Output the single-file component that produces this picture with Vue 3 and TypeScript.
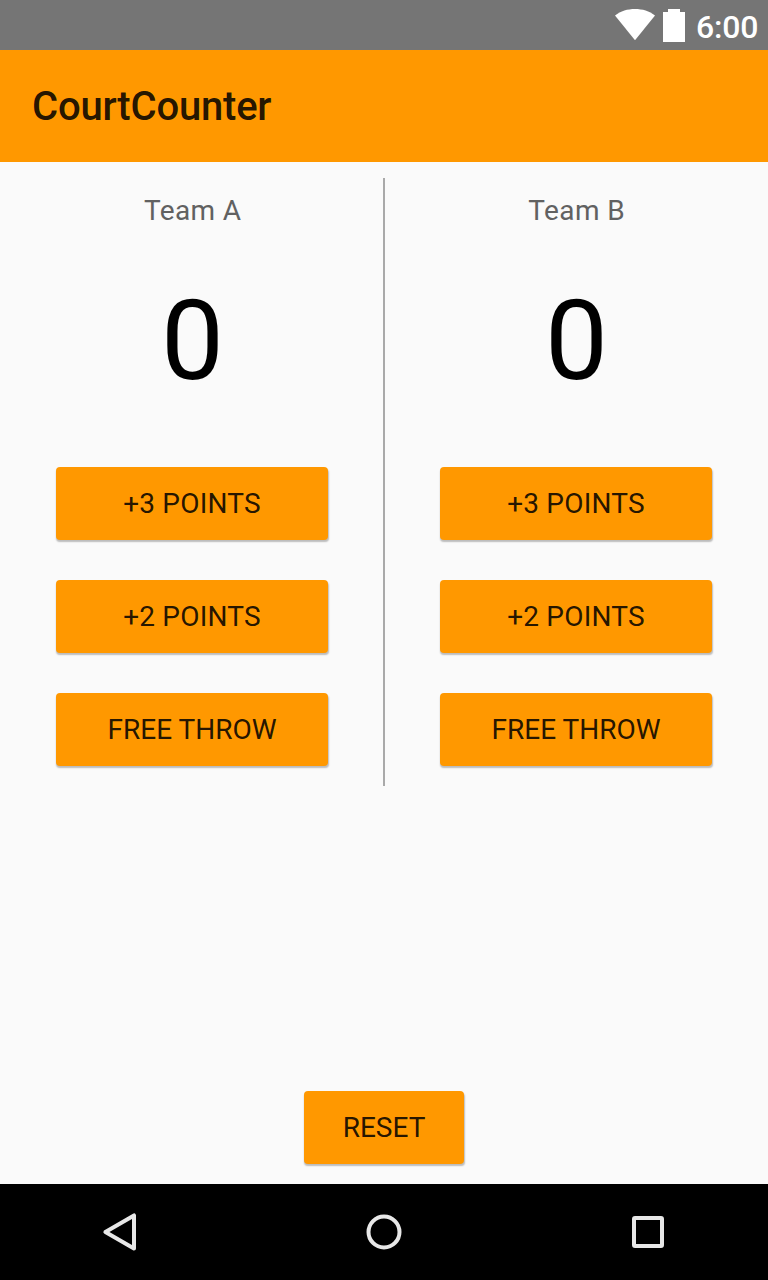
<script setup lang="ts">
import { reactive } from 'vue'

interface Team {
  name: string
  score: number
}

const teams = reactive<Team[]>([
  { name: 'Team A', score: 0 },
  { name: 'Team B', score: 0 },
])

const actions = [
  { label: '+3 Points', points: 3, wide: true },
  { label: '+2 Points', points: 2, wide: true },
  { label: 'Free throw', points: 1, wide: false },
]

function reset(): void {
  teams.forEach((team) => (team.score = 0))
}
</script>

<template>
  <div class="screen">
    <header class="status">
      <svg class="wifi" width="40" height="32" viewBox="0 0 40 32">
        <path d="M20 31.300 L0 6.500 C5.800 2 12.500 0 20 0 S34.200 2 40 6.500 Z" fill="#fff" />
      </svg>
      <svg class="battery" width="22" height="33" viewBox="0 0 22 33">
        <path d="M5 0 H17 V3 H22 V33 H0 V3 H5 Z" fill="#fff" />
      </svg>
      <span class="clock">6:00</span>
    </header>
    <div class="appbar"><h1 class="title">CourtCounter</h1></div>
    <main class="content">
      <div class="board">
        <section v-for="team in teams" :key="team.name" class="team">
          <h2 class="name">{{ team.name }}</h2>
          <div class="score">{{ team.score }}</div>
          <div class="actions">
            <button
              v-for="action in actions"
              :key="action.label"
              class="btn"
              :class="{ wide: action.wide }"
              @click="team.score += action.points"
            >
              {{ action.label }}
            </button>
          </div>
        </section>
      </div>
      <button class="btn reset" @click="reset">Reset</button>
    </main>
    <nav class="nav">
      <svg width="60" height="60" viewBox="0 0 60 60">
        <path d="M44 15.400 V48.600 L15.400 32 Z" />
      </svg>
      <svg width="60" height="60" viewBox="0 0 60 60">
        <circle cx="30" cy="32" r="15.500" />
      </svg>
      <svg width="60" height="60" viewBox="0 0 60 60">
        <rect x="16" y="18" width="28" height="28" rx="1" />
      </svg>
    </nav>
  </div>
</template>

<style>
body {
  margin: 0;
}
</style>

<style scoped>
.screen {
  display: flex;
  flex-direction: column;
  width: 768px;
  height: 1280px;
  overflow: hidden;
  background: #fafafa;
  font-family: Roboto, sans-serif;
}
.status {
  display: flex;
  justify-content: flex-end;
  height: 50px;
  box-sizing: border-box;
  padding: 9px 10px 0 0;
  background: #757575;
}
.wifi,
.battery {
  flex: none;
}
.battery {
  margin-left: 8px;
}
.clock {
  width: 62px;
  margin-left: 11px;
  color: #fff;
  font-size: 32px;
  font-weight: 500;
  line-height: 37px;
  letter-spacing: -0.2px;
}
.appbar {
  display: flex;
  align-items: center;
  height: 112px;
  box-sizing: border-box;
  padding: 2px 0 0 32px;
  background: #ff9800;
}
.title {
  margin: 0;
  color: rgba(0, 0, 0, 0.87);
  font-size: 40px;
  font-weight: 500;
  line-height: 48px;
  letter-spacing: -0.2px;
}
.content {
  display: flex;
  flex: 1;
  flex-direction: column;
  align-items: center;
  justify-content: space-between;
  padding: 16px 0 20px;
}
.board {
  display: flex;
  width: 100%;
  height: 608px;
  background: linear-gradient(#a9a9a9, #a9a9a9) 383px 0 / 2px 100% no-repeat;
}
.team {
  display: flex;
  flex: 1;
  flex-direction: column;
  align-items: center;
}
.name {
  margin: 16px 0 0;
  padding-left: 1.5px;
  color: #616161;
  font-size: 28px;
  font-weight: 400;
  line-height: 33px;
  letter-spacing: 0.4px;
}
.score {
  margin-top: 48px;
  padding-left: 1px;
  color: #000;
  font-size: 112px;
  line-height: 131px;
}
.actions {
  display: flex;
  flex-direction: column;
  gap: 40px;
  margin-top: 61px;
}
.btn {
  width: 272px;
  height: 73px;
  padding: 0;
  border: 0;
  border-radius: 4px;
  background: #ff9800;
  box-shadow: 0.5px 2px 1.5px rgba(0, 0, 0, 0.25);
  color: rgba(0, 0, 0, 0.87);
  font: 400 28px/33px Roboto, sans-serif;
  text-transform: uppercase;
}
.wide {
  letter-spacing: 0.2px;
}
.reset {
  width: 160px;
}
.nav {
  display: flex;
  justify-content: space-between;
  height: 96px;
  box-sizing: border-box;
  padding: 16px 90px 0;
  background: #000;
}
.nav svg {
  fill: none;
  stroke: #e8e8e8;
  stroke-width: 4;
  stroke-linejoin: round;
}
</style>
